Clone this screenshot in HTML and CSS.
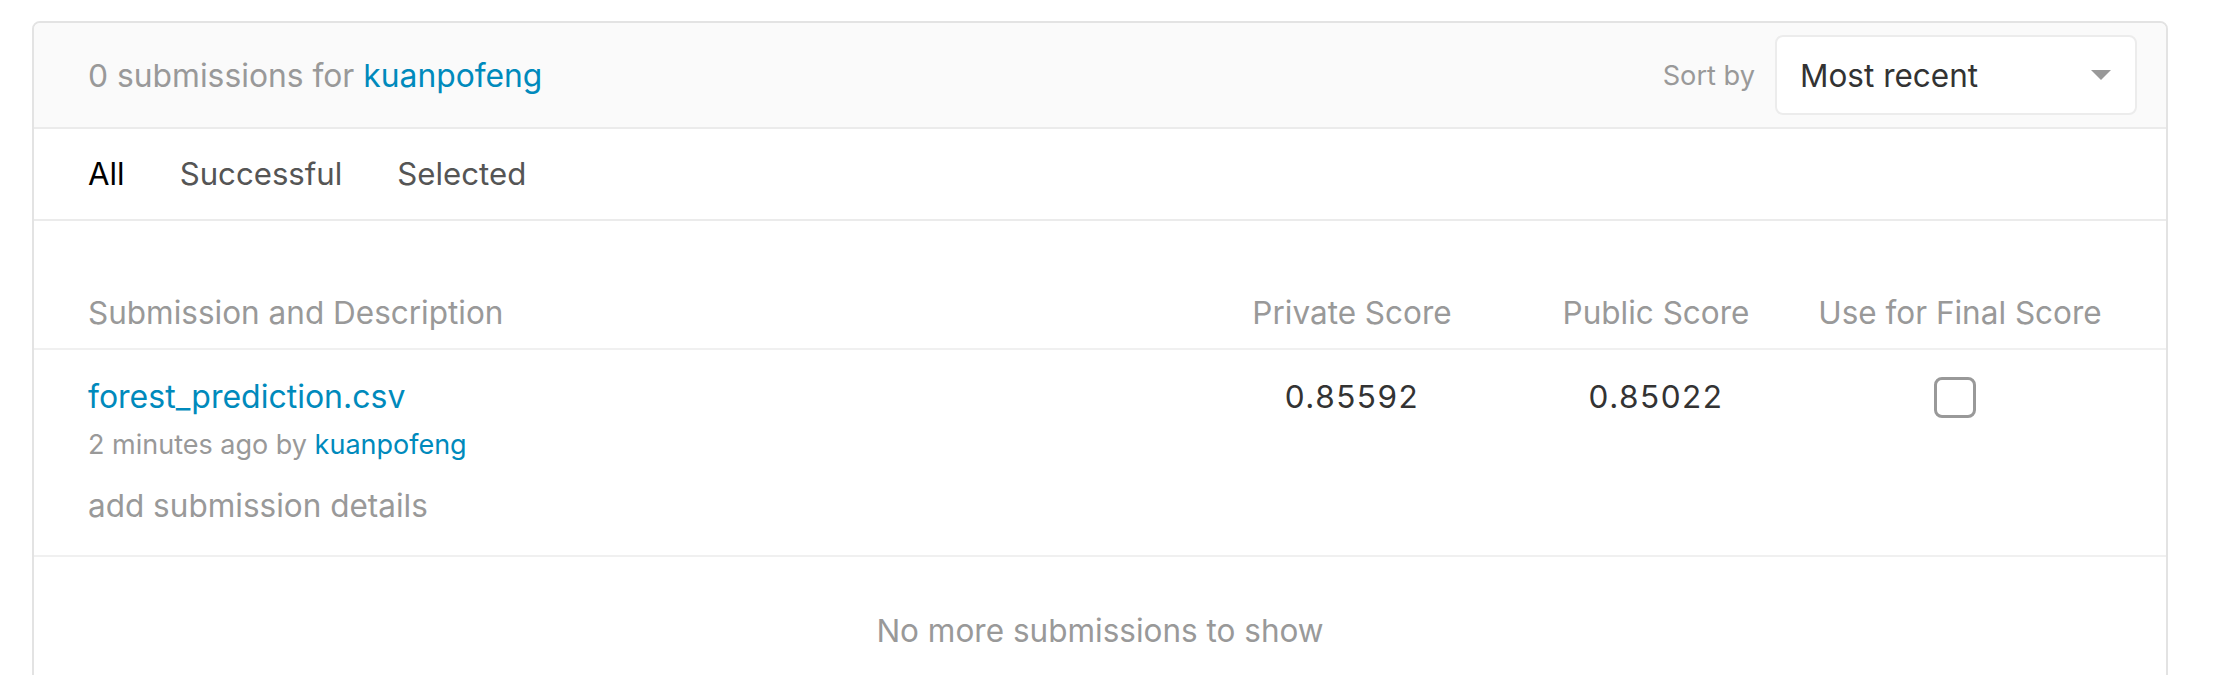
FILE: index.html
```html
<!DOCTYPE html>
<html>
<head>
<meta charset="utf-8">
<link rel="stylesheet" href="styles.css">
</head>
<body>
<div class="card">
  <div class="card-header">
    <div class="title">0 submissions for <a class="link">kuanpofeng</a></div>
    <div class="sort">
      <span class="sort-label">Sort by</span>
      <div class="select">
        <span class="select-value">Most recent</span>
        <span class="caret"></span>
      </div>
    </div>
  </div>
  <div class="tabs">
    <span class="tab active">All</span>
    <span class="tab">Successful</span>
    <span class="tab">Selected</span>
  </div>
  <div class="table">
    <div class="thead">
      <div class="col-desc">Submission and Description</div>
      <div class="col-score">Private Score</div>
      <div class="col-score">Public Score</div>
      <div class="col-score">Use for Final Score</div>
    </div>
    <div class="row">
      <div class="col-desc">
        <div class="file link">forest_prediction.csv</div>
        <div class="meta">2 minutes ago by <a class="link">kuanpofeng</a></div>
        <div class="details">add submission details</div>
      </div>
      <div class="col-score value">0.85592</div>
      <div class="col-score value">0.85022</div>
      <div class="col-score check-col"><span class="checkbox"></span></div>
    </div>
    <div class="footer">No more submissions to show</div>
  </div>
</div>
</body>
</html>
```
FILE: styles.css
```css
html, body {
  margin: 0;
  padding: 0;
  background: #fff;
}
body {
  font-family: Inter, "Noto Sans", sans-serif;
  color: #999;
  padding: 21px 51px 0 32px;
}
.link {
  color: #008abc;
  text-decoration: none;
}
.card {
  border: 2px solid #e3e3e3;
  border-radius: 8px;
  overflow: hidden;
}
.card-header {
  background: #fafafa;
  height: 104px;
  border-bottom: 2px solid #ebebeb;
  display: flex;
  align-items: center;
  justify-content: space-between;
  padding: 0 29px 0 54px;
}
.title {
  font-size: 31.8px;
  color: #999;
}
.sort {
  display: flex;
  align-items: center;
  gap: 20px;
}
.sort-label {
  font-size: 27.2px;
  color: #999;
}
.select {
  width: 362px;
  height: 80px;
  box-sizing: border-box;
  background: #fff;
  border: 2px solid #ececec;
  border-radius: 8px;
  display: flex;
  align-items: center;
  justify-content: space-between;
  padding: 0 24px 0 23px;
}
.select-value {
  font-size: 31.5px;
  color: #333;
}
.caret {
  width: 0;
  height: 0;
  border-left: 10px solid transparent;
  border-right: 10px solid transparent;
  border-top: 10px solid #999;
}
.tabs {
  height: 90px;
  border-bottom: 2px solid #ebebeb;
  display: flex;
  align-items: center;
  gap: 55px;
  padding-left: 54px;
}
.tab {
  font-size: 31.2px;
  color: #555;
}
.tab.active {
  color: #000;
}
.table {
  padding-top: 55px;
}
.thead, .row {
  display: flex;
  padding: 0 54px;
}
.thead {
  height: 72px;
  align-items: center;
  border-bottom: 2px solid #f0f0f0;
  font-size: 31.5px;
  color: #999;
}
.col-desc {
  flex: 1;
}
.col-score {
  width: 304px;
  text-align: center;
}
.row {
  border-bottom: 2px solid #f0f0f0;
  padding-top: 27px;
  padding-bottom: 29px;
}
.file {
  font-size: 32px;
  line-height: 40px;
}
.meta {
  font-size: 27px;
  line-height: 32px;
  margin-top: 12px;
  color: #999;
}
.details {
  font-size: 31.5px;
  line-height: 40px;
  margin-top: 25px;
  color: #999;
}
.value {
  font-size: 31.5px;
  line-height: 40px;
  letter-spacing: 1.5px;
  color: #333;
}
.check-col {
  padding-right: 10px;
  box-sizing: border-box;
}
.checkbox {
  display: inline-block;
  width: 42px;
  height: 41px;
  box-sizing: border-box;
  border: 3px solid #999;
  border-radius: 8px;
}
.footer {
  text-align: center;
  font-size: 31.5px;
  color: #999;
  padding: 54px 0 120px;
}
```
